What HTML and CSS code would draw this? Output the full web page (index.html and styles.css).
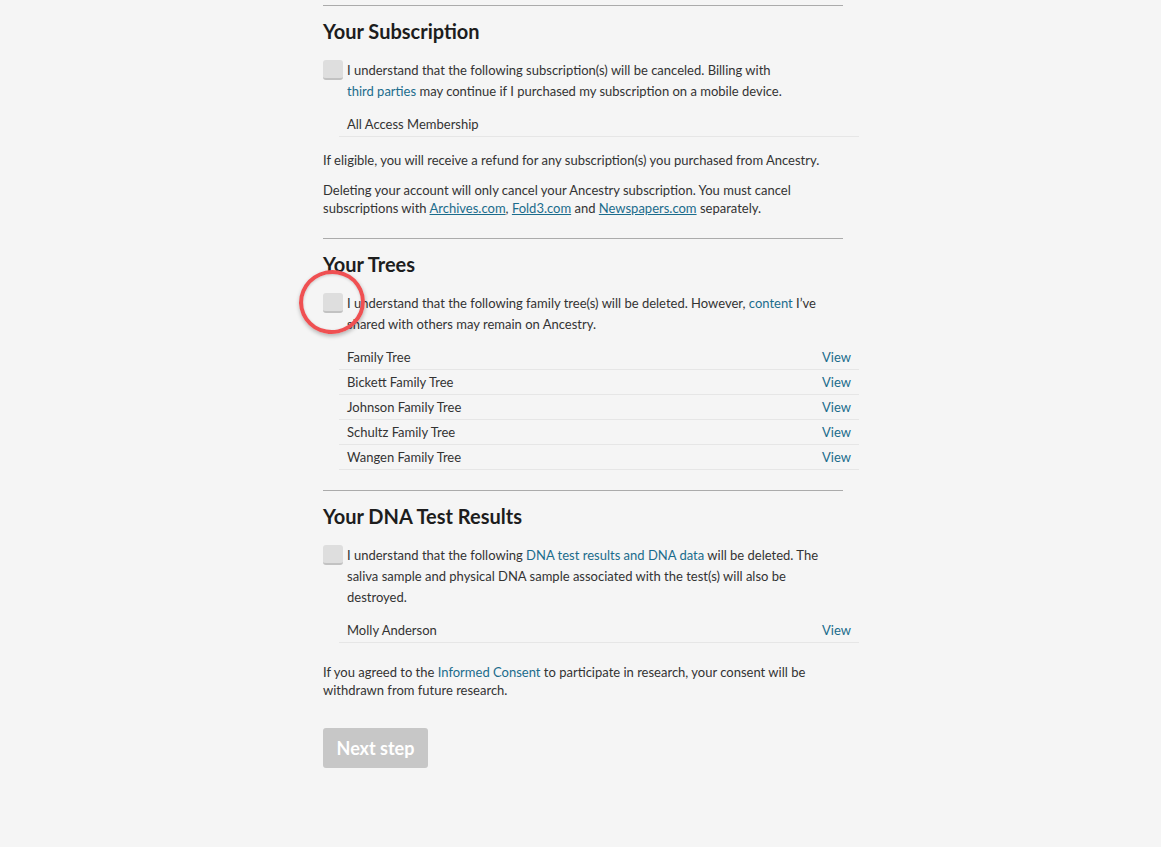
FILE: index.html
```html
<!DOCTYPE html>
<html lang="en">
<head>
<meta charset="utf-8">
<title>Delete account</title>
<link rel="stylesheet" href="styles.css">
</head>
<body>
<main class="page">
  <section class="section">
    <h2 class="section-title">Your Subscription</h2>
    <label class="agree">
      <span class="box"></span>
      <span class="agree-text">I understand that the following subscription(s) will be canceled. Billing with<br><a class="link" href="#">third parties</a> may continue if I purchased my subscription on a mobile device.</span>
    </label>
    <ul class="items">
      <li class="item"><span>All Access Membership</span></li>
    </ul>
    <p class="note note-first">If eligible, you will receive a refund for any subscription(s) you purchased from Ancestry.</p>
    <p class="note note-last">Deleting your account will only cancel your Ancestry subscription. You must cancel subscriptions with <a class="ulink" href="#">Archives.com</a>, <a class="ulink" href="#">Fold3.com</a> and <a class="ulink" href="#">Newspapers.com</a> separately.</p>
  </section>

  <section class="section">
    <h2 class="section-title">Your Trees</h2>
    <label class="agree">
      <span class="box"><span class="ring"></span></span>
      <span class="agree-text">I understand that the following family tree(s) will be deleted. However, <a class="link" href="#">content</a> I’ve<br>shared with others may remain on Ancestry.</span>
    </label>
    <ul class="items">
      <li class="item"><span>Family Tree</span><a class="link" href="#">View</a></li>
      <li class="item"><span>Bickett Family Tree</span><a class="link" href="#">View</a></li>
      <li class="item"><span>Johnson Family Tree</span><a class="link" href="#">View</a></li>
      <li class="item"><span>Schultz Family Tree</span><a class="link" href="#">View</a></li>
      <li class="item"><span>Wangen Family Tree</span><a class="link" href="#">View</a></li>
    </ul>
  </section>

  <section class="section section-last">
    <h2 class="section-title">Your DNA Test Results</h2>
    <label class="agree">
      <span class="box"></span>
      <span class="agree-text">I understand that the following <a class="link" href="#">DNA test results and DNA data</a> will be deleted. The<br>saliva sample and physical DNA sample associated with the test(s) will also be<br>destroyed.</span>
    </label>
    <ul class="items">
      <li class="item"><span>Molly Anderson</span><a class="link" href="#">View</a></li>
    </ul>
    <p class="note note-consent">If you agreed to the <a class="link" href="#">Informed Consent</a> to participate in research, your consent will be withdrawn from future research.</p>
    <button class="next" type="button" disabled>Next step</button>
  </section>
</main>
</body>
</html>
```

FILE: styles.css
```css
* { box-sizing: border-box; }

html, body {
  margin: 0;
  padding: 0;
  background: #f5f5f5;
}

body {
  font-family: Lato, "Open Sans", Arial, sans-serif;
  font-size: 13px;
  color: #333;
}

.page {
  width: 520px;
  margin-left: 323px;
  padding-top: 5px;
  padding-bottom: 78px;
}

.section {
  border-top: 1px solid #ababab;
  padding-bottom: 20px;
}

.section-last {
  padding-bottom: 0;
}

.section-title {
  margin: 13px 0 17px;
  font-size: 20px;
  line-height: 24px;
  font-weight: 700;
  color: #1d1d1d;
}

.agree {
  display: flex;
  align-items: flex-start;
  gap: 4px;
  line-height: 21px;
  cursor: pointer;
}

.box {
  position: relative;
  flex: none;
  width: 20px;
  height: 20px;
  background: #dedede;
  border-radius: 3px;
  border-bottom: 2px solid #c2c2c2;
}

.ring {
  position: absolute;
  left: -24px;
  top: -23px;
  width: 66px;
  height: 64px;
  border: 4px solid #ef5052;
  border-radius: 50%;
  box-shadow: 0 2px 4px rgba(0, 0, 0, 0.28), inset 0 1px 3px rgba(0, 0, 0, 0.18);
  transform: rotate(-12deg);
  pointer-events: none;
}

.link {
  color: #1b6c8c;
  text-decoration: none;
}

.ulink {
  color: #1b6c8c;
  text-decoration: underline;
}

.items {
  list-style: none;
  margin: 10px 0 0 16px;
  padding: 0;
  width: 520px;
}

.item {
  display: flex;
  justify-content: space-between;
  padding: 0 8px;
  line-height: 24px;
  border-bottom: 1px solid #e6e6e6;
}

.note {
  margin: 12px 0 0;
  line-height: 18px;
}

.note-first { margin-top: 14px; }
.note-last { margin-bottom: 1px; }
.note-consent { margin-top: 20px; }

.next {
  display: block;
  margin-top: 29px;
  width: 105px;
  height: 40px;
  padding: 0;
  border: 0;
  border-radius: 3px;
  background: #c7c7c7;
  color: #fff;
  font-family: inherit;
  font-size: 18px;
  font-weight: 700;
}
```
